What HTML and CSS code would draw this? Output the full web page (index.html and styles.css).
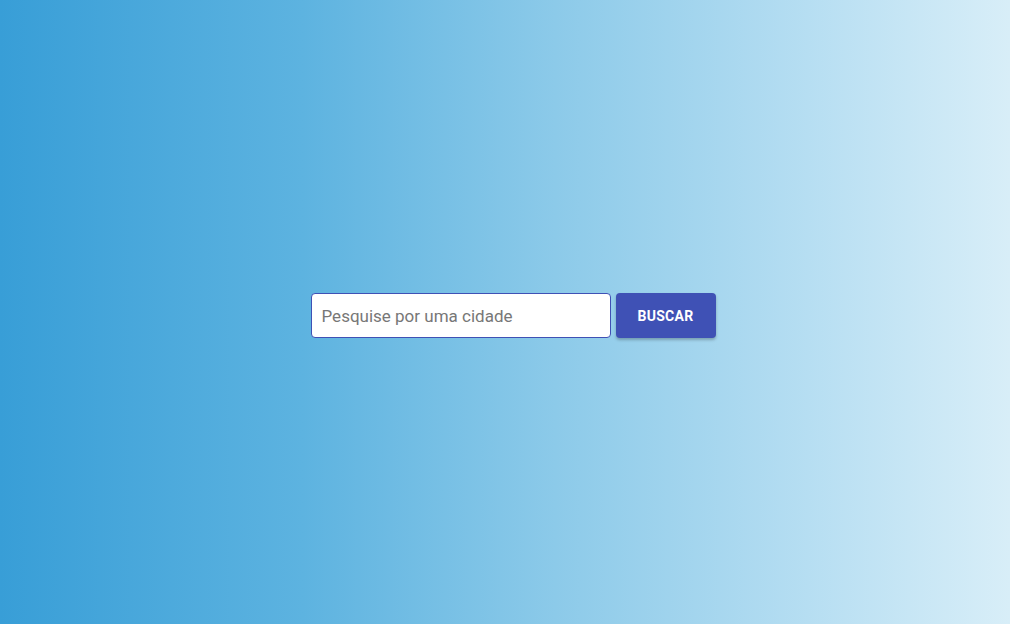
FILE: index.html
```html
<!DOCTYPE html>
<html lang="pt-BR">
<head>
<meta charset="utf-8">
<title>Busca</title>
<link rel="stylesheet" href="styles.css">
</head>
<body>
<main class="page">
  <form class="search" onsubmit="return false">
    <input class="search-input" type="text" placeholder="Pesquise por uma cidade">
    <button class="search-btn" type="submit">BUSCAR</button>
  </form>
</main>
</body>
</html>
```
FILE: styles.css
```css
html, body {
  margin: 0;
  padding: 0;
}
body {
  font-family: Roboto, "Liberation Sans", Arial, sans-serif;
}
.page {
  box-sizing: border-box;
  height: 624px;
  width: 100%;
  display: flex;
  align-items: center;
  justify-content: center;
  padding: 7px 0 0 16px;
  background: linear-gradient(to right, #389ed7 0%, #5db3e0 30%, #8ccae9 55%, #b6def2 80%, #d8eef8 100%);
}
.search {
  display: flex;
  gap: 5px;
  margin: 0;
}
.search-input {
  box-sizing: border-box;
  width: 300px;
  height: 45px;
  border: 1px solid #3f51b5;
  border-radius: 4px;
  background: #fff;
  padding: 0 10px;
  font-family: Roboto, "Liberation Sans", Arial, sans-serif;
  font-size: 17px;
  color: #333;
  outline: none;
}
.search-input::placeholder {
  color: #777;
}
.search-btn {
  box-sizing: border-box;
  width: 100px;
  height: 45px;
  border: none;
  border-radius: 4px;
  background: #3f51b5;
  color: #fff;
  font-family: Roboto, "Liberation Sans", Arial, sans-serif;
  font-weight: 700;
  font-size: 14px;
  letter-spacing: 0.3px;
  box-shadow: 0 2px 3px rgba(0, 0, 0, 0.25);
  cursor: pointer;
}
```
